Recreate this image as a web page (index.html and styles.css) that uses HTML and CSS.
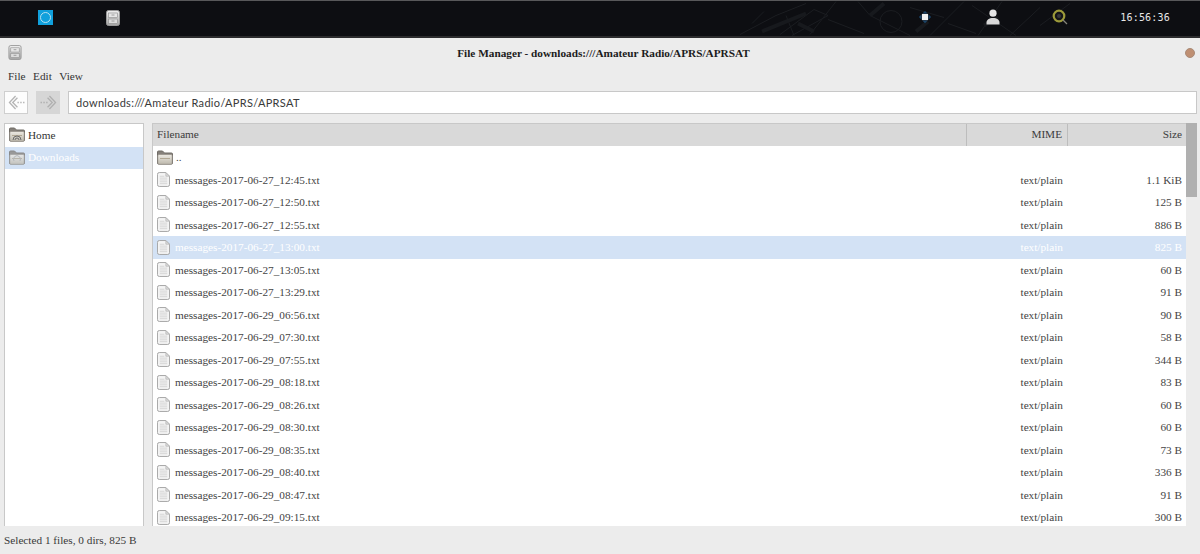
FILE: index.html
```html
<!DOCTYPE html>
<html lang="en">
<head>
<meta charset="utf-8">
<title>File Manager</title>
<link rel="stylesheet" href="styles.css">
</head>
<body>
<svg class="defs" width="0" height="0" aria-hidden="true">
  <defs>
    <linearGradient id="cab" x1="0" y1="0" x2="0" y2="1"><stop offset="0" stop-color="#f0f0f0"/><stop offset="1" stop-color="#a4a4a4"/></linearGradient>
    <linearGradient id="fold" x1="0" y1="0" x2="0" y2="1"><stop offset="0" stop-color="#ece9e2"/><stop offset="1" stop-color="#bdb8ac"/></linearGradient>
    <symbol id="cabinet" viewBox="0 0 14 16">
      <rect x=".5" y=".5" width="13" height="15" rx="2" fill="url(#cab)" stroke="#9a9a9a"/>
      <rect x="2.500" y="3" width="9" height="4.500" fill="#e6e6e6" stroke="#8a8a8a" stroke-width=".6"/>
      <rect x="2.500" y="9" width="9" height="4.500" fill="#dcdcdc" stroke="#8a8a8a" stroke-width=".6"/>
      <path d="M5.500 5h3M5.500 11h3" stroke="#8a8a8a" stroke-width=".8"/>
    </symbol>
    <symbol id="doc" viewBox="0 0 14 16">
      <path d="M2.500.5h7l4 4v9a2 2 0 0 1-2 2h-9a2 2 0 0 1-2-2v-11a2 2 0 0 1 2-2z" fill="#f4f4f4" stroke="#a0a0a0"/>
      <path d="M9.500.5v4h4z" fill="#dadada" stroke="#a8a8a8" stroke-width=".6"/>
      <path d="M3 4.500h5M3 6.500h8M3 8.500h8M3 10.500h8M3 12.500h8" stroke="#cfcfcf" stroke-width=".9"/>
    </symbol>
    <symbol id="folder" viewBox="0 0 16 15">
      <path d="M.5 13V2a1 1 0 0 1 1-1h4l2 2h7a1 1 0 0 1 1 1v9a1 1 0 0 1-1 1h-13a1 1 0 0 1-1-1z" fill="#85807a" stroke="#706c67"/>
      <rect x=".8" y="4.500" width="14.400" height="9.800" rx="1.200" fill="url(#fold)" stroke="#8b8780" stroke-width=".6"/>
      <path d="M3 8.500h10" stroke="#b0a794"/>
    </symbol>
  </defs>
</svg>
<div class="page">
  <header class="topbar">
    <div class="tray-left">
      <span class="start"><span class="start-ring"></span></span>
      <svg class="task-icon"><use href="#cabinet"/></svg>
    </div>
    <svg class="texture" viewBox="0 0 360 34" aria-hidden="true">
      <path d="M0 33 36 14l30-12M40 33 74 8l14 6-36 20M96 0 70 33M118 0l12 14 40 20M140 20a11 11 0 1 0 22 0 11 11 0 1 0-22 0M190 34l34-34M232 4l44 30M262 0l-24 34M88 18l36 14M46 14l8 20M170 6l34 10M300 6l-30 28M300 24l30-22M12 22l12-12M208 22l28 10" fill="none" stroke="#1b1d21" stroke-width="1"/>
      <path d="M22 30 66 12M58 22l16 8M130 14l14-12M244 24l14-8M176 30l12-10" fill="none" stroke="#17191d" stroke-width="4"/>
    </svg>
    <div class="tray-right">
      <svg class="tray-net" viewBox="0 0 16 16"><path d="M8 1 11 4H5zM8 15 5 12h6zM1 8l3-3v6zM15 8l-3 3V5z" fill="#1b4468"/><rect x="4.500" y="4.500" width="7" height="7" fill="#f2f2f2"/></svg>
      <svg class="tray-user" viewBox="0 0 14 16"><circle cx="7" cy="4.200" r="3.600" fill="#e6e6e6"/><path d="M.5 15.500v-2c0-2.500 2.500-4.500 6.500-4.500s6.500 2 6.500 4.500v2z" fill="#d8d8d8"/></svg>
      <svg class="tray-search" viewBox="0 0 16 16"><circle cx="7" cy="7" r="5.300" fill="#141518" stroke="#9c9a3a" stroke-width="2.200"/><circle cx="7" cy="7" r="2" fill="#36373a"/><path d="m11 11 4 4" stroke="#85857a" stroke-width="1.300"/></svg>
      <time class="clock">16:56:36</time>
    </div>
  </header>

  <main class="window">
    <div class="titlebar">
      <svg class="win-icon"><use href="#cabinet"/></svg>
      <h1 class="title">File Manager - downloads:///Amateur Radio/APRS/APRSAT</h1>
      <span class="win-close"></span>
    </div>
    <nav class="menubar"><span>File</span><span>Edit</span><span>View</span></nav>
    <div class="toolbar">
      <button class="nav-btn" type="button" aria-label="Back">
        <svg viewBox="0 0 18 16"><path d="M8 1 1.500 8 8 15M10 3 5 8l5 5" fill="none" stroke="#b5b5b5" stroke-width="1.400"/><path d="M10 8h1.500M13 8h1.500M16 8h1.500" stroke="#b5b5b5" stroke-width="1.600"/></svg>
      </button>
      <button class="nav-btn is-disabled" type="button" aria-label="Forward">
        <svg viewBox="0 0 18 16"><path d="M10 1l6.500 7L10 15M8 3l5 5-5 5" fill="none" stroke="#b0b0b0" stroke-width="1.400"/><path d="M.5 8H2M3.500 8H5M6.500 8H8" stroke="#b0b0b0" stroke-width="1.600"/></svg>
      </button>
      <div class="address">downloads:///Amateur Radio/APRS/APRSAT</div>
    </div>
    <div class="panes">
      <aside class="places">
        <div class="place">
          <svg class="place-icon" viewBox="0 0 16 15"><use href="#folder"/><path d="M4 13a4 4 0 0 1 8 0M6 13a2 2 0 0 1 4 0" fill="none" stroke="#6a6a6a"/></svg>
          Home
        </div>
        <div class="place is-selected">
          <svg class="place-icon is-faded" viewBox="0 0 16 15"><use href="#folder"/><path d="M5 11a3.500 3.500 0 1 1 6 0" fill="none" stroke="#aaa"/></svg>
          Downloads
        </div>
      </aside>
      <section class="files">
        <div class="list">
          <div class="head">
            <div class="hcell">Filename</div>
            <div class="hcell right">MIME</div>
            <div class="hcell right last">Size</div>
          </div>
          <div class="rows" id="rows">
            <div class="row"><div class="name"><svg class="folder-icon"><use href="#folder"/></svg>..</div><div></div><div></div></div>
            <div class="row"><div class="name"><svg class="doc-icon"><use href="#doc"/></svg>messages-2017-06-27_12:45.txt</div><div class="mime">text/plain</div><div class="size">1.1 KiB</div></div>
            <div class="row"><div class="name"><svg class="doc-icon"><use href="#doc"/></svg>messages-2017-06-27_12:50.txt</div><div class="mime">text/plain</div><div class="size">125 B</div></div>
            <div class="row"><div class="name"><svg class="doc-icon"><use href="#doc"/></svg>messages-2017-06-27_12:55.txt</div><div class="mime">text/plain</div><div class="size">886 B</div></div>
            <div class="row is-selected"><div class="name"><svg class="doc-icon"><use href="#doc"/></svg>messages-2017-06-27_13:00.txt</div><div class="mime">text/plain</div><div class="size">825 B</div></div>
            <div class="row"><div class="name"><svg class="doc-icon"><use href="#doc"/></svg>messages-2017-06-27_13:05.txt</div><div class="mime">text/plain</div><div class="size">60 B</div></div>
            <div class="row"><div class="name"><svg class="doc-icon"><use href="#doc"/></svg>messages-2017-06-27_13:29.txt</div><div class="mime">text/plain</div><div class="size">91 B</div></div>
            <div class="row"><div class="name"><svg class="doc-icon"><use href="#doc"/></svg>messages-2017-06-29_06:56.txt</div><div class="mime">text/plain</div><div class="size">90 B</div></div>
            <div class="row"><div class="name"><svg class="doc-icon"><use href="#doc"/></svg>messages-2017-06-29_07:30.txt</div><div class="mime">text/plain</div><div class="size">58 B</div></div>
            <div class="row"><div class="name"><svg class="doc-icon"><use href="#doc"/></svg>messages-2017-06-29_07:55.txt</div><div class="mime">text/plain</div><div class="size">344 B</div></div>
            <div class="row"><div class="name"><svg class="doc-icon"><use href="#doc"/></svg>messages-2017-06-29_08:18.txt</div><div class="mime">text/plain</div><div class="size">83 B</div></div>
            <div class="row"><div class="name"><svg class="doc-icon"><use href="#doc"/></svg>messages-2017-06-29_08:26.txt</div><div class="mime">text/plain</div><div class="size">60 B</div></div>
            <div class="row"><div class="name"><svg class="doc-icon"><use href="#doc"/></svg>messages-2017-06-29_08:30.txt</div><div class="mime">text/plain</div><div class="size">60 B</div></div>
            <div class="row"><div class="name"><svg class="doc-icon"><use href="#doc"/></svg>messages-2017-06-29_08:35.txt</div><div class="mime">text/plain</div><div class="size">73 B</div></div>
            <div class="row"><div class="name"><svg class="doc-icon"><use href="#doc"/></svg>messages-2017-06-29_08:40.txt</div><div class="mime">text/plain</div><div class="size">336 B</div></div>
            <div class="row"><div class="name"><svg class="doc-icon"><use href="#doc"/></svg>messages-2017-06-29_08:47.txt</div><div class="mime">text/plain</div><div class="size">91 B</div></div>
            <div class="row"><div class="name"><svg class="doc-icon"><use href="#doc"/></svg>messages-2017-06-29_09:15.txt</div><div class="mime">text/plain</div><div class="size">300 B</div></div>
          </div>
        </div>
        <div class="scrollbar"><div class="thumb"></div></div>
      </section>
    </div>
    <footer class="status">Selected 1 files, 0 dirs, 825 B</footer>
  </main>
</div>
</body>
</html>
```
FILE: styles.css
```css
* { box-sizing: border-box; }
html, body { margin: 0; height: 100%; overflow: hidden; }
body { font-family: "Liberation Serif", "Times New Roman", serif; font-size: 11.250px; color: #333; background: #ececec; }
.defs { position: absolute; }
.page { height: 554px; display: flex; flex-direction: column; }

.topbar { height: 38px; flex: none; position: relative; display: flex; justify-content: space-between; background: #0d0e12; border-top: 1px solid #58585a; border-bottom: 2px solid #2c2c2e; }
.tray-left { display: flex; align-items: center; padding: 0 0 2px 38px; gap: 53px; }
.start { width: 15px; height: 15px; background: #10a0dc; display: flex; align-items: center; justify-content: center; }
.start-ring { width: 11px; height: 11px; border: 1px solid #b6e0f0; border-radius: 50%; }
.task-icon { width: 14px; height: 16px; }
.texture { position: absolute; right: 100px; top: 0; width: 360px; height: 35px; }
.tray-right { display: flex; align-items: center; position: relative; padding: 0 30px 3px 0; }
.tray-net { width: 14px; height: 14px; }
.tray-user { width: 14px; height: 16px; margin-left: 54px; }
.tray-search { width: 16px; height: 16px; margin-left: 52px; }
.clock { font-family: "DejaVu Sans Mono", monospace; font-size: 10px; color: #e8e8e8; margin-left: 52px; letter-spacing: .2px; }

.window { flex: 1; min-height: 0; display: flex; flex-direction: column; background: #ececec; }
.titlebar { height: 30px; flex: none; display: flex; align-items: center; padding: 0 5px 1px 8px; }
.win-icon { width: 14px; height: 15px; flex: none; }
.title { flex: 1; margin: 0; font-size: 11.250px; font-weight: bold; color: #1c1c1c; text-align: center; }
.win-close { width: 10px; height: 10px; border-radius: 50%; background: #bf8f72; border: 1px solid #a98b78; }

.menubar { height: 17px; flex: none; display: flex; gap: 7.500px; padding-left: 8px; align-items: center; line-height: 17px; }

.toolbar { height: 23px; margin-top: 6px; flex: none; display: flex; padding: 0 3px 0 4px; }
.nav-btn { width: 24px; height: 23px; padding: 0; margin-right: 8px; background: #fdfdfd; border: 1px solid #cfcfcf; display: flex; align-items: center; justify-content: center; }
.nav-btn svg { width: 17px; height: 15px; }
.nav-btn.is-disabled { background: #d6d6d6; border-color: #d6d6d6; }
.address { flex: 1; background: #fff; border: 1px solid #c8c8c8; font-family: Lato, sans-serif; font-size: 11px; letter-spacing: .32px; line-height: 21px; padding-left: 7px; color: #3a3a3a; }

.panes { flex: 1; min-height: 0; display: flex; gap: 8px; padding: 9px 3px 0 4px; }
.places { width: 140px; flex: none; background: #fff; border: 1px solid #c8c8c8; border-bottom: 0; }
.place { height: 22.500px; display: flex; align-items: center; gap: 3px; padding: 0 0 1px 4px; }
.place.is-selected { background: #d3e2f5; color: #fff; }
.place-icon { width: 16px; height: 15px; }
.place-icon.is-faded { opacity: .75; }

.files { flex: 1; min-width: 0; display: flex; background: #fff; border-left: 1px solid #c8c8c8; overflow: hidden; }
.list { flex: 1; min-width: 0; overflow: hidden; border-top: 1px solid #c8c8c8; }
.head, .row { display: grid; grid-template-columns: 814px 101px 1fr; }
.head { height: 22px; background: #d9d9d9; }
.hcell { line-height: 21px; padding: 0 4px; color: #3c3c3c; border-right: 1px solid #bdbdbd; }
.hcell.right { padding-right: 5px; }
.hcell.last { border-right: 0; padding-right: 4px; }
.right { text-align: right; }
.row { height: 22.500px; line-height: 22px; color: #444; align-items: start; }
.row.is-selected { background: #d3e2f5; color: #fff; }
.name { display: flex; align-items: center; height: 22px; padding-left: 4px; white-space: nowrap; }
.doc-icon { width: 13px; height: 15px; margin-right: 5px; flex: none; }
.folder-icon { width: 16px; height: 15px; margin-right: 3px; flex: none; }
.mime { text-align: right; padding-right: 5px; }
.size { text-align: right; padding-right: 4px; }

.scrollbar { width: 11px; flex: none; background: #ececec; }
.thumb { height: 74px; background: #b0b0b0; }

.status { height: 28px; flex: none; line-height: 28px; padding-left: 4px; color: #3a3a3a; }
```
